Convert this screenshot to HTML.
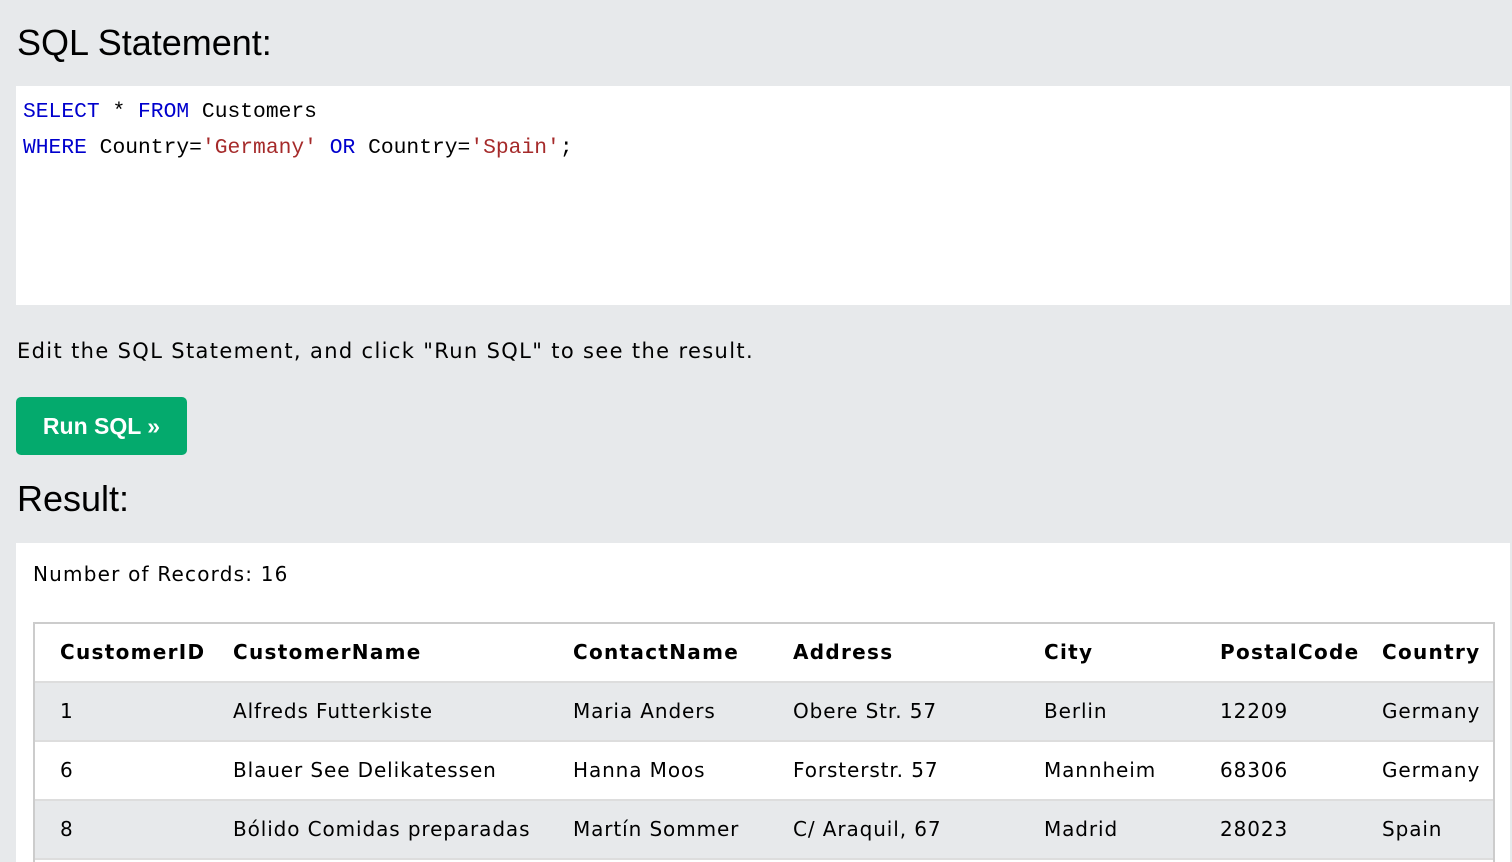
<!DOCTYPE html>
<html style="overflow:hidden"><head><style>
html,body{overflow:hidden}
body{margin:0;background:#e7e9eb;width:1512px;height:862px;position:relative;font-family:"DejaVu Sans",Verdana,sans-serif;color:#000}
.h{position:absolute;left:17px;font-family:"Liberation Sans",sans-serif;font-size:36px;color:#000}
.code{position:absolute;left:16px;top:86px;width:1494px;height:219px;background:#fff;font-family:"Liberation Mono",monospace;font-size:21.3px;line-height:36px;padding:0}
.code div{position:absolute;left:7px;white-space:pre}
.k{color:#0000cd}.s{color:#a52a2a}
.p{position:absolute;left:17px;top:339px;font-size:21px;letter-spacing:1.35px}
.btn{position:absolute;left:16px;top:397px;width:171px;height:58px;background:#04aa6d;border-radius:5px;color:#fff;font-family:"Liberation Sans",sans-serif;font-weight:bold;font-size:23px;line-height:58px;text-align:center}
.res{position:absolute;left:16px;top:543px;width:1494px;height:319px;background:#fff;overflow:hidden}
.n{position:absolute;left:17px;top:19px;font-size:20px;letter-spacing:1.2px}
.tbl{position:absolute;left:17px;top:79px;width:1458px;height:240px;border:2px solid #ccc;border-bottom:none;overflow:hidden}
.row{position:absolute;left:0;width:1458px;height:57px;border-bottom:2px solid #ddd}
.row span{position:absolute;top:0;line-height:57px;font-size:20px;white-space:nowrap;letter-spacing:0.9px}
.hd span{font-weight:bold;letter-spacing:1.3px}
.g{background:#e7e9eb}
</style></head><body>
<div class="h" style="top:22px">SQL Statement:</div>
<div class="code">
<div style="top:8px"><span class="k">SELECT</span> * <span class="k">FROM</span> Customers</div>
<div style="top:44px"><span class="k">WHERE</span> Country=<span class="s">'Germany'</span> <span class="k">OR</span> Country=<span class="s">'Spain'</span>;</div>
</div>
<div class="p">Edit the SQL Statement, and click "Run SQL" to see the result.</div>
<div class="btn">Run SQL »</div>
<div class="h" style="top:478px">Result:</div>
<div class="res">
<div class="n">Number of Records: 16</div>
<div class="tbl">
<div class="row hd" style="top:0"><span style="left:25px">CustomerID</span><span style="left:198px">CustomerName</span><span style="left:538px">ContactName</span><span style="left:758px">Address</span><span style="left:1009px">City</span><span style="left:1185px">PostalCode</span><span style="left:1347px">Country</span></div>
<div class="row g" style="top:59px"><span style="left:25px">1</span><span style="left:198px">Alfreds Futterkiste</span><span style="left:538px">Maria Anders</span><span style="left:758px">Obere Str. 57</span><span style="left:1009px">Berlin</span><span style="left:1185px">12209</span><span style="left:1347px">Germany</span></div>
<div class="row" style="top:118px"><span style="left:25px">6</span><span style="left:198px">Blauer See Delikatessen</span><span style="left:538px">Hanna Moos</span><span style="left:758px">Forsterstr. 57</span><span style="left:1009px">Mannheim</span><span style="left:1185px">68306</span><span style="left:1347px">Germany</span></div>
<div class="row g" style="top:177px"><span style="left:25px">8</span><span style="left:198px">Bólido Comidas preparadas</span><span style="left:538px">Martín Sommer</span><span style="left:758px">C/ Araquil, 67</span><span style="left:1009px">Madrid</span><span style="left:1185px">28023</span><span style="left:1347px">Spain</span></div>
</div>
</div>
</body></html>
